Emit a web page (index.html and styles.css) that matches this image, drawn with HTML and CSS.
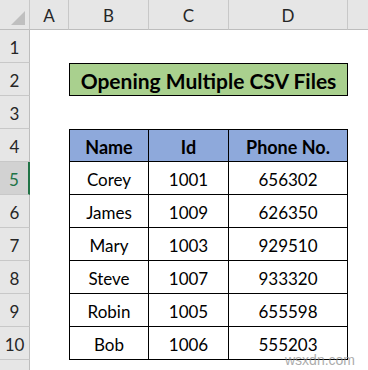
FILE: index.html
```html
<!DOCTYPE html>
<html>
<head>
<meta charset="utf-8">
<link rel="stylesheet" href="styles.css">
</head>
<body>
<div class="sheet">
  <div class="corner"><svg class="tri" width="16" height="16" viewBox="0 0 16 16"><polygon points="15,1 15,15 1,15" fill="#bfbfbf"/></svg></div>
  <div class="ch">A</div><div class="ch">B</div><div class="ch">C</div><div class="ch">D</div><div class="ch last"></div>

  <div class="rh">1</div><div class="c"></div><div class="c"></div><div class="c"></div><div class="c"></div><div class="c"></div>

  <div class="rh">2</div><div class="c"></div><div class="title">Opening Multiple CSV Files</div><div class="c"></div>

  <div class="rh">3</div><div class="c"></div><div class="c"></div><div class="c"></div><div class="c"></div><div class="c"></div>

  <div class="rh">4</div><div class="c"></div><div class="t th first">Name</div><div class="t th">Id</div><div class="t th">Phone No.</div><div class="c"></div>

  <div class="rh sel">5</div><div class="c"></div><div class="t first">Corey</div><div class="t">1001</div><div class="t">656302</div><div class="c"></div>
  <div class="rh">6</div><div class="c"></div><div class="t first">James</div><div class="t">1009</div><div class="t">626350</div><div class="c"></div>
  <div class="rh">7</div><div class="c"></div><div class="t first">Mary</div><div class="t">1003</div><div class="t">929510</div><div class="c"></div>
  <div class="rh">8</div><div class="c"></div><div class="t first">Steve</div><div class="t">1007</div><div class="t">933320</div><div class="c"></div>
  <div class="rh">9</div><div class="c"></div><div class="t first">Robin</div><div class="t">1005</div><div class="t">655598</div><div class="c"></div>
  <div class="rh">10</div><div class="c"></div><div class="t first">Bob</div><div class="t">1006</div><div class="t">555203</div><div class="c"></div>
  <div class="rh end"></div><div class="c"></div><div class="c"></div><div class="c"></div><div class="c"></div><div class="c"></div>
</div>
<div class="wm">wsxdn.com</div>
</body>
</html>
```

FILE: styles.css
```css
html, body {
  margin: 0;
  padding: 0;
  background: #ffffff;
  overflow: hidden;
}
body {
  width: 368px;
  height: 370px;
  position: relative;
  font-family: Lato, "Noto Sans", sans-serif;
  color: #000;
}
.sheet {
  display: grid;
  grid-template-columns: 30px 39px 80px 80px 119px 20px;
  grid-template-rows: 30px repeat(10, 33px) 10px;
}
.corner {
  background: #e6e6e6;
  border-right: 1px solid #c8c8c8;
  border-bottom: 1px solid #bdbdbd;
  position: relative;
}
.tri {
  position: absolute;
  right: 3px;
  bottom: 3px;
}
.ch {
  background: #e6e6e6;
  border-right: 1px solid #c8c8c8;
  border-bottom: 1px solid #bdbdbd;
  display: flex;
  align-items: center;
  justify-content: center;
  font-size: 17px;
  color: #262626;
  padding-top: 2px;
}
.ch.last { border-right: none; }
.rh {
  background: #e6e6e6;
  border-right: 1px solid #bdbdbd;
  border-bottom: 1px solid #c8c8c8;
  display: flex;
  align-items: center;
  justify-content: center;
  font-size: 17px;
  color: #262626;
  padding-top: 3px;
}
.rh.end { border-bottom: none; }
.rh.sel {
  background: #d2d2d2;
  color: #217346;
  border-right: 2px solid #217346;
}
.c { background: #fff; }
.title {
  grid-column: span 3;
  background: #a9d08e;
  border: 1px solid #000;
  display: flex;
  align-items: center;
  justify-content: center;
  font-weight: 700;
  font-size: 21px;
  padding-top: 2px;
  white-space: nowrap;
}
.t {
  border-right: 1px solid #000;
  border-bottom: 1px solid #000;
  display: flex;
  align-items: center;
  justify-content: center;
  font-size: 17px;
  padding-top: 3px;
  white-space: nowrap;
}
.t.first { border-left: 1px solid #000; }
.th {
  background: #8ea9db;
  border-top: 1px solid #000;
  font-weight: 700;
  font-size: 18px;
}
.wm {
  position: absolute;
  left: 285px;
  top: 352px;
  font-family: "Liberation Sans", sans-serif;
  font-size: 14px;
  line-height: 16px;
  color: #8a8a8a;
  opacity: 0.7;
}
```
